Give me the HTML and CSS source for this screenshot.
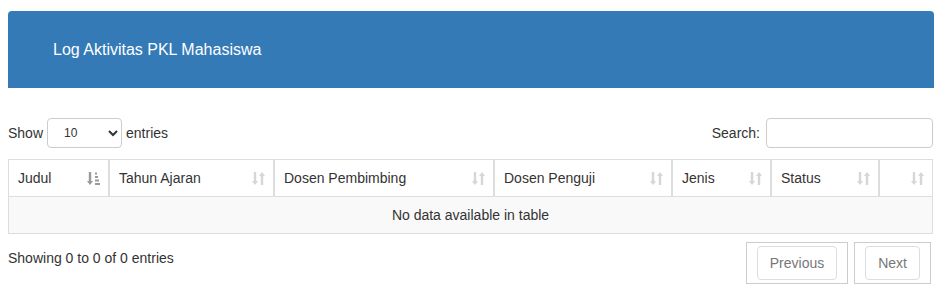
FILE: index.html
```html
<!DOCTYPE html>
<html lang="en">
<head>
    <meta charset="UTF-8">
    <meta name="viewport" content="width=device-width, initial-scale=1.0">
    <title>Log Aktivitas PKL Mahasiswa</title>
    <link rel="stylesheet" href="styles.css">
</head>
<body>

<div class="page">
    <div class="panel-heading">
        <h3>Log Aktivitas PKL Mahasiswa</h3>
    </div>

    <div class="controls">
        <label class="length">Show
            <select class="length-select">
                <option>10</option>
                <option>25</option>
                <option>50</option>
                <option>100</option>
            </select>
            entries</label>
        <label class="filter">Search:
            <input type="search" class="search-input">
        </label>
    </div>

    <table class="data-table">
        <thead>
            <tr>
                <th style="width: 101px;">Judul <span class="sort active"><svg width="13" height="15" viewBox="0 0 13 15"><path d="M3 1v10" stroke="currentColor" stroke-width="2.4"/><path d="M0 10h6l-3 4z" fill="currentColor"/><path d="M8 2.5h2M8 6h3M8 9.5h4M8 13h5" stroke="currentColor" stroke-width="1.8"/></svg></span></th>
                <th style="width: 165px;">Tahun Ajaran <span class="sort"><svg width="13" height="15" viewBox="0 0 13 15"><path d="M3 1v10" stroke="currentColor" stroke-width="2.4"/><path d="M0 10h6l-3 4z" fill="currentColor"/><path d="M10 4v10" stroke="currentColor" stroke-width="2.4"/><path d="M7 5h6l-3-4z" fill="currentColor"/></svg></span></th>
                <th style="width: 220px;">Dosen Pembimbing <span class="sort"><svg width="13" height="15" viewBox="0 0 13 15"><path d="M3 1v10" stroke="currentColor" stroke-width="2.4"/><path d="M0 10h6l-3 4z" fill="currentColor"/><path d="M10 4v10" stroke="currentColor" stroke-width="2.4"/><path d="M7 5h6l-3-4z" fill="currentColor"/></svg></span></th>
                <th style="width: 178px;">Dosen Penguji <span class="sort"><svg width="13" height="15" viewBox="0 0 13 15"><path d="M3 1v10" stroke="currentColor" stroke-width="2.4"/><path d="M0 10h6l-3 4z" fill="currentColor"/><path d="M10 4v10" stroke="currentColor" stroke-width="2.4"/><path d="M7 5h6l-3-4z" fill="currentColor"/></svg></span></th>
                <th style="width: 99px;">Jenis <span class="sort"><svg width="13" height="15" viewBox="0 0 13 15"><path d="M3 1v10" stroke="currentColor" stroke-width="2.4"/><path d="M0 10h6l-3 4z" fill="currentColor"/><path d="M10 4v10" stroke="currentColor" stroke-width="2.4"/><path d="M7 5h6l-3-4z" fill="currentColor"/></svg></span></th>
                <th style="width: 108px;">Status <span class="sort"><svg width="13" height="15" viewBox="0 0 13 15"><path d="M3 1v10" stroke="currentColor" stroke-width="2.4"/><path d="M0 10h6l-3 4z" fill="currentColor"/><path d="M10 4v10" stroke="currentColor" stroke-width="2.4"/><path d="M7 5h6l-3-4z" fill="currentColor"/></svg></span></th>
                <th style="width: 54px;"><span class="sort"><svg width="13" height="15" viewBox="0 0 13 15"><path d="M3 1v10" stroke="currentColor" stroke-width="2.4"/><path d="M0 10h6l-3 4z" fill="currentColor"/><path d="M10 4v10" stroke="currentColor" stroke-width="2.4"/><path d="M7 5h6l-3-4z" fill="currentColor"/></svg></span></th>
            </tr>
        </thead>
        <tbody>
            <tr class="odd">
                <td colspan="7" class="empty">No data available in table</td>
            </tr>
        </tbody>
    </table>

    <div class="footer">
        <div class="info">Showing 0 to 0 of 0 entries</div>
        <ul class="pagination">
            <li class="page-item disabled"><a href="#">Previous</a></li>
            <li class="page-item disabled"><a href="#">Next</a></li>
        </ul>
    </div>
</div>

</body>
</html>
```

FILE: styles.css
```css
body {
    font-family: "Liberation Sans", Arial, sans-serif;
    font-size: 14px;
    line-height: 20px;
    color: #333;
    background-color: #fff;
    margin: 0;
    padding: 0;
}

.page {
    width: 926px;
    padding: 11px 0 0 8px;
}

.panel-heading {
    background-color: #337ab7;
    color: #fff;
    height: 77px;
    padding-left: 45px;
    border-radius: 4px 4px 0 0;
    display: flex;
    align-items: center;
}

.panel-heading h3 {
    margin: 0;
    font-size: 16px;
    font-weight: normal;
}

.controls {
    display: flex;
    justify-content: space-between;
    align-items: center;
    margin-top: 30px;
    width: 925px;
}

.length,
.filter {
    display: flex;
    align-items: center;
    gap: 4px;
}

.length-select {
    width: 75px;
    height: 30px;
    padding: 0 10px 0 12px;
    font-family: inherit;
    font-size: 12px;
    color: #333;
    border: 1px solid #ccc;
    border-radius: 4px;
    background-color: #fff;
}

.filter {
    gap: 6px;
}

.search-input {
    width: 167px;
    height: 30px;
    box-sizing: border-box;
    border: 1px solid #ccc;
    border-radius: 4px;
    padding: 5px 10px;
    font-family: inherit;
    font-size: 12px;
}

.data-table {
    margin-top: 11px;
    width: 925px;
    table-layout: fixed;
    border-collapse: separate;
    border-spacing: 0;
}

.data-table th {
    box-sizing: border-box;
    position: relative;
    height: 37px;
    padding: 8px 30px 8px 9px;
    text-align: left;
    font-weight: normal;
    border: 1px solid #ddd;
    white-space: nowrap;
}

.sort {
    position: absolute;
    right: 8px;
    top: 11px;
    color: #d6d6d6;
    line-height: 0;
}

.sort.active {
    color: #9a9a9a;
}

.data-table td {
    height: 36px;
    box-sizing: border-box;
    padding: 8px;
    border-left: 1px solid #ddd;
    border-right: 1px solid #ddd;
    border-bottom: 1px solid #ddd;
}

.odd td {
    background-color: #f9f9f9;
}

.empty {
    text-align: center;
}

.footer {
    display: flex;
    justify-content: space-between;
    align-items: flex-start;
    width: 923px;
    margin-top: 8px;
}

.info {
    padding-top: 6px;
}

.pagination {
    display: flex;
    gap: 6px;
    list-style: none;
    margin: 0;
    padding: 0;
}

.page-item {
    padding: 3px 10px;
    border: 1px solid #ccc;
}

.page-item a {
    display: block;
    padding: 6px 12px;
    border: 1px solid #ddd;
    border-radius: 4px;
    color: #777;
    text-decoration: none;
}
```
